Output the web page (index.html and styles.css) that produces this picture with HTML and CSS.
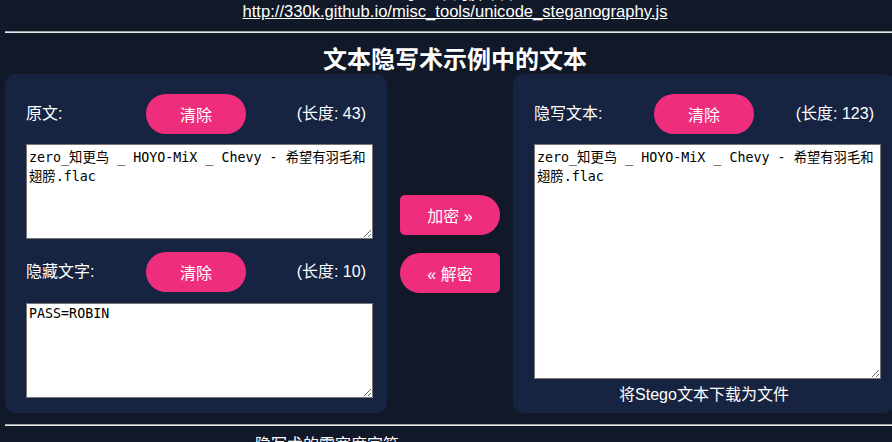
FILE: index.html
```html
<!DOCTYPE html>
<html lang="zh-CN">
<head>
<meta charset="utf-8">
<title>文本隐写术示例</title>
<link rel="stylesheet" href="styles.css">
</head>
<body>
<div class="page">
  <p class="lead">基于以下的脚本库:</p>
  <p class="source"><a href="#">http://330k.github.io/misc_tools/unicode_steganography.js</a></p>
  <hr class="rule">
  <h2 class="title">文本隐写术示例中的文本</h2>
  <div class="workspace">
    <section class="panel">
      <div class="field-head">
        <span class="label">原文:</span>
        <button class="pill">清除</button>
        <span class="count">(长度: 43)</span>
      </div>
      <textarea class="box">zero_知更鸟 _ HOYO-MiX _ Chevy - 希望有羽毛和翅膀.flac</textarea>
      <div class="field-head field-head-second">
        <span class="label">隐藏文字:</span>
        <button class="pill">清除</button>
        <span class="count">(长度: 10)</span>
      </div>
      <textarea class="box">PASS=ROBIN</textarea>
    </section>
    <div class="actions">
      <button class="act act-enc">加密 »</button>
      <button class="act act-dec">« 解密</button>
    </div>
    <section class="panel">
      <div class="field-head">
        <span class="label">隐写文本:</span>
        <button class="pill">清除</button>
        <span class="count">(长度: 123)</span>
      </div>
      <textarea class="box box-tall">zero_知更鸟 _ HOYO-MiX _ Chevy - 希望有羽毛和翅膀.flac</textarea>
      <div class="download">将Stego文本下载为文件</div>
    </section>
  </div>
  <hr class="rule rule-bottom">
  <h3 class="sub">隐写术的零宽度字符</h3>
</div>
</body>
</html>
```
FILE: styles.css
```css
html, body {
  margin: 0;
  padding: 0;
  overflow: hidden;
  background: #111827;
}
body {
  font-family: "Liberation Sans", "Noto Sans CJK SC", sans-serif;
  color: #ffffff;
}
.page {
  width: 900px;
  margin-left: 5px;
}
.lead {
  margin: -15px 0 0;
  font-size: 16px;
  line-height: 18px;
  text-align: center;
}
.source {
  margin: 0;
  font-size: 16.6px;
  line-height: 18px;
  text-align: center;
}
.source a {
  color: #ffffff;
  text-decoration: underline;
}
.rule {
  margin: 10px 0 0;
  height: 0;
  border: 0;
  border-top: 1px solid #a3a3a3;
  border-bottom: 1px solid #e8e8e8;
}
.title {
  margin: 12px 0 0;
  font-size: 24px;
  line-height: 29px;
  font-weight: bold;
  text-align: center;
}
.workspace {
  display: flex;
  align-items: stretch;
  height: 339px;
}
.panel {
  box-sizing: border-box;
  width: 382px;
  flex: none;
  background: #162341;
  border-radius: 10px;
  padding: 20px 21px 15px;
}
.field-head {
  display: grid;
  grid-template-columns: 1fr auto 1fr;
  align-items: center;
  height: 40px;
  margin-bottom: 10px;
}
.field-head-second {
  margin-top: 13px;
  margin-bottom: 11px;
}
.label, .count {
  font-size: 16px;
  line-height: 20px;
  white-space: nowrap;
}
.count {
  justify-self: end;
}
.pill {
  width: 100px;
  height: 40px;
  border: 0;
  border-radius: 20px;
  background: #ef2d7d;
  color: #ffffff;
  font-family: "Liberation Sans", "Noto Sans CJK SC", sans-serif;
  font-size: 16px;
  padding: 0;
}
.box {
  display: block;
  box-sizing: border-box;
  width: 347px;
  height: 95px;
  margin: 0;
  padding: 2px;
  border: 1px solid #767676;
  background: #ffffff;
  color: #000000;
  font-family: "DejaVu Sans Mono", "Noto Sans CJK SC", monospace;
  font-size: 13.333px;
}
.box-tall {
  height: 235px;
}
.download {
  margin-top: 6px;
  font-size: 16px;
  line-height: 20px;
  text-align: center;
}
.actions {
  width: 126px;
  flex: none;
  display: flex;
  flex-direction: column;
  justify-content: center;
  align-items: center;
  gap: 18px;
}
.act {
  width: 100px;
  height: 40px;
  border: 0;
  background: #ef2d7d;
  color: #ffffff;
  font-family: "Liberation Sans", "Noto Sans CJK SC", sans-serif;
  font-size: 16px;
  padding: 0;
}
.act-enc {
  border-radius: 5px 20px 20px 5px;
}
.act-dec {
  border-radius: 20px 5px 5px 20px;
}
.rule-bottom {
  margin-top: 11px;
}
.sub {
  margin: 9px 0 0;
  padding-left: 250px;
  font-size: 16px;
  line-height: 20px;
  font-weight: normal;
}
```
